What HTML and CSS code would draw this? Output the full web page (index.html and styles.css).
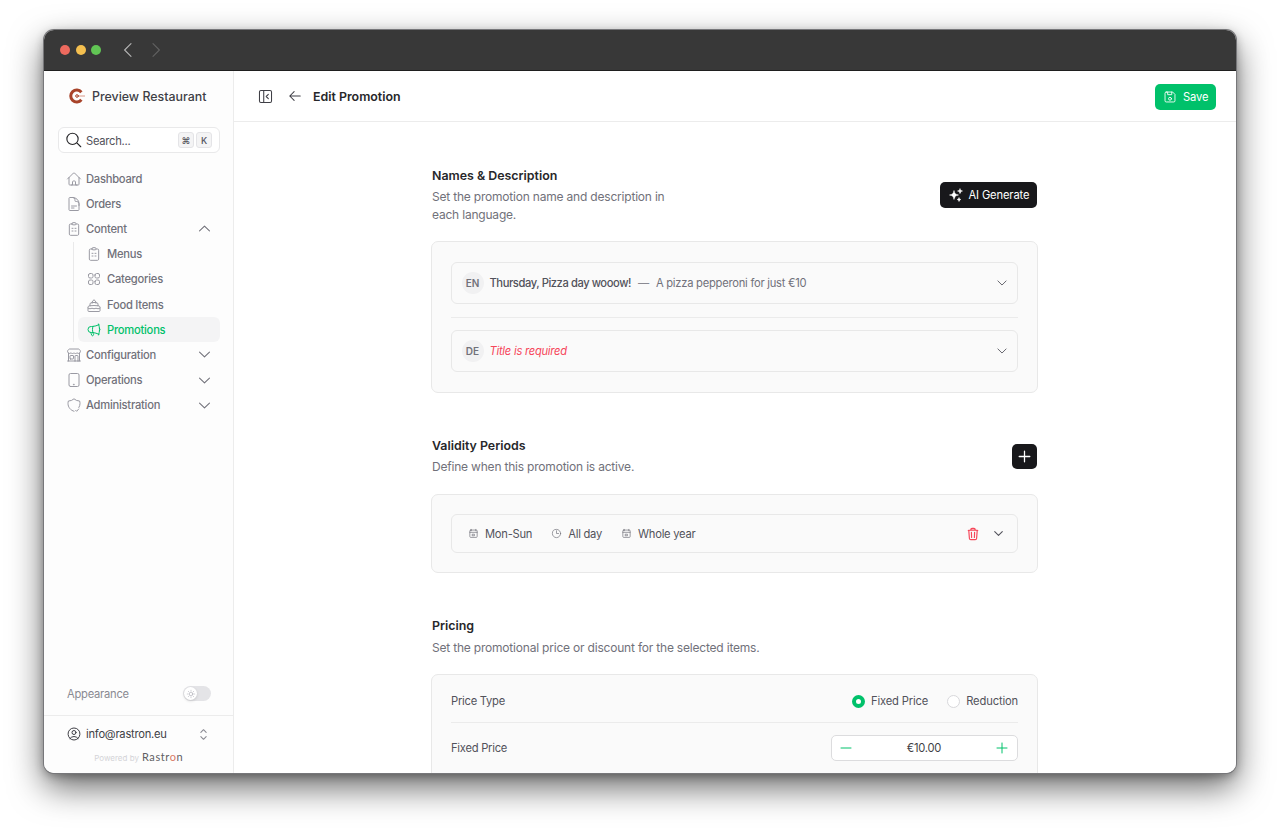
FILE: index.html
```html
<!DOCTYPE html>
<html lang="en">
<head>
    <meta charset="UTF-8">
    <title>Edit Promotion</title>
    <link rel="stylesheet" href="styles.css">
</head>
<body>
    <!-- icon sprite -->
    <svg class="sprite" xmlns="http://www.w3.org/2000/svg">
        <symbol id="i-home" viewBox="0 0 24 24"><path d="M2.25 12l8.954-8.955c.44-.439 1.152-.439 1.591 0L21.75 12M4.5 9.75v10.125c0 .621.504 1.125 1.125 1.125H9.75v-4.875c0-.621.504-1.125 1.125-1.125h2.25c.621 0 1.125.504 1.125 1.125V21h4.125c.621 0 1.125-.504 1.125-1.125V9.75M8.25 21h8.25"/></symbol>
        <symbol id="i-doc" viewBox="0 0 24 24"><path d="M19.5 14.25v-2.625a3.375 3.375 0 00-3.375-3.375h-1.5A1.125 1.125 0 0113.5 7.125v-1.5a3.375 3.375 0 00-3.375-3.375H8.25m0 12.75h7.5m-7.5 3H12M10.5 2.25H5.625c-.621 0-1.125.504-1.125 1.125v17.25c0 .621.504 1.125 1.125 1.125h12.75c.621 0 1.125-.504 1.125-1.125V11.25a9 9 0 00-9-9z"/></symbol>
        <symbol id="i-clip" viewBox="0 0 24 24"><path d="M9 4.5H6.75A1.75 1.75 0 005 6.25v13.5c0 .97.78 1.75 1.75 1.75h10.5c.97 0 1.75-.78 1.75-1.75V6.25a1.75 1.75 0 00-1.75-1.75H15M9 4.5V3.75c0-.7.55-1.25 1.25-1.25h3.5c.7 0 1.25.55 1.25 1.25v.75c0 .7-.55 1.25-1.25 1.25h-3.5C9.55 5.75 9 5.2 9 4.5zM9 11h1.5M13.5 11H15M9 15h1.5M13.5 15H15"/></symbol>
        <symbol id="i-grid" viewBox="0 0 24 24"><path d="M3.75 6A2.25 2.25 0 016 3.75h2.25A2.25 2.25 0 0110.5 6v2.25a2.25 2.25 0 01-2.25 2.25H6a2.25 2.25 0 01-2.25-2.25V6zM3.75 15.75A2.25 2.25 0 016 13.5h2.25a2.25 2.25 0 012.25 2.25V18a2.25 2.25 0 01-2.25 2.25H6A2.25 2.25 0 013.75 18v-2.25zM13.5 6a2.25 2.25 0 012.25-2.25H18A2.25 2.25 0 0120.25 6v2.25A2.25 2.25 0 0118 10.5h-2.25a2.25 2.25 0 01-2.25-2.25V6zM13.5 15.75a2.25 2.25 0 012.25-2.25H18a2.25 2.25 0 012.25 2.25V18A2.25 2.25 0 0118 20.25h-2.25A2.25 2.25 0 0113.5 18v-2.25z"/></symbol>
        <symbol id="i-cake" viewBox="0 0 24 24"><path d="M9 9.5V7.5l3-3.5 3 3.5v2M6 13.1v-2.5c0-1.1.85-2.1 1.98-2.2a48 48 0 018.04 0c1.13.1 1.98 1.1 1.98 2.2v2.5M21 16.5l-1.5.75a3.354 3.354 0 01-3 0 3.354 3.354 0 00-3 0 3.354 3.354 0 01-3 0 3.354 3.354 0 00-3 0 3.354 3.354 0 01-3 0L3 16.5m15-3.38a48.474 48.474 0 00-12 0m12 0c.39.049.777.102 1.163.16 1.07.16 1.837 1.094 1.837 2.175v5.17c0 .62-.504 1.124-1.125 1.124H4.125A1.125 1.125 0 013 20.625v-5.17c0-1.08.768-2.014 1.837-2.174A47.78 47.78 0 016 13.12"/></symbol>
        <symbol id="i-mega" viewBox="0 0 24 24"><path d="M10.34 15.84c-.688-.06-1.386-.09-2.09-.09H7.5a4.5 4.5 0 110-9h.75c.704 0 1.402-.03 2.09-.09m0 9.18c.253.962.584 1.892.985 2.783.247.55.06 1.21-.463 1.511l-.657.38c-.551.318-1.26.117-1.527-.461a20.845 20.845 0 01-1.44-4.282m3.102.069a18.03 18.03 0 01-.59-4.59c0-1.586.205-3.124.59-4.59m0 9.18a23.848 23.848 0 018.835 2.535M10.34 6.66a23.847 23.847 0 008.835-2.535m0 0A23.74 23.74 0 0018.795 3m.38 1.125a23.91 23.91 0 011.014 5.395m-1.014 8.855c-.118.38-.245.754-.38 1.125m.38-1.125a23.91 23.91 0 001.014-5.395m0-3.46c.495.413.811 1.035.811 1.73 0 .695-.316 1.317-.811 1.73m0-3.46a24.347 24.347 0 010 3.46"/></symbol>
        <symbol id="i-store" viewBox="0 0 24 24"><path d="M13.5 21v-7.5a.75.75 0 01.75-.75h3a.75.75 0 01.75.75V21m-4.5 0H2.36m11.14 0H18m0 0h3.64m-1.39 0V9.349m-16.5 11.65V9.35m0 0a3.001 3.001 0 003.75-.615A2.993 2.993 0 009.75 9.75c.896 0 1.7-.393 2.25-1.016a2.993 2.993 0 002.25 1.016c.896 0 1.7-.393 2.25-1.016a3.001 3.001 0 003.75.614m-16.5 0a3.004 3.004 0 01-.621-4.72L4.318 3.44A1.5 1.5 0 015.378 3h13.243a1.5 1.5 0 011.06.44l1.19 1.189a3 3 0 01-.621 4.72m-13.5 8.65h3.75a.75.75 0 00.75-.75V13.5a.75.75 0 00-.75-.75H6.75a.75.75 0 00-.75.75v3.75c0 .415.336.75.75.75z"/></symbol>
        <symbol id="i-tablet" viewBox="0 0 24 24"><path d="M6.75 21.75h10.5a2.25 2.25 0 002.25-2.25v-15a2.25 2.25 0 00-2.25-2.25H6.75A2.25 2.25 0 004.5 4.5v15a2.25 2.25 0 002.25 2.25zM11.6 18.4h.8v.8h-.8z"/></symbol>
        <symbol id="i-shield" viewBox="0 0 24 24"><path d="M12 21.4C6.8 20 3 15.3 3 9.75c0-1.3.2-2.6.6-3.75A12 12 0 0012 2.7 12 12 0 0020.4 6c.4 1.2.6 2.45.6 3.75 0 2.2-.6 4.2-1.7 6M14.5 20l1.5 1.5 3-3.5"/></symbol>
        <symbol id="i-user" viewBox="0 0 24 24"><path d="M17.982 18.725A7.488 7.488 0 0012 15.75a7.488 7.488 0 00-5.982 2.975m11.963 0a9 9 0 10-11.963 0m11.963 0A8.966 8.966 0 0112 21a8.966 8.966 0 01-5.982-2.275M15 9.75a3 3 0 11-6 0 3 3 0 016 0z"/></symbol>
        <symbol id="i-down" viewBox="0 0 24 24"><path d="M5 8.5l7 7 7-7"/></symbol>
        <symbol id="i-up" viewBox="0 0 24 24"><path d="M5 15.5l7-7 7 7"/></symbol>
        <symbol id="i-cal" viewBox="0 0 24 24"><path d="M7 3v3M17 3v3M4 9.5h16M6 4.5h12a2 2 0 012 2v12a2 2 0 01-2 2H6a2 2 0 01-2-2v-12a2 2 0 012-2zM10 13.5h4V17h-4z"/></symbol>
        <symbol id="i-clock" viewBox="0 0 24 24"><path d="M12 6v6h4.5m4.5 0a9 9 0 11-18 0 9 9 0 0118 0z"/></symbol>
        <symbol id="i-trash" viewBox="0 0 24 24"><path d="M14.74 9l-.346 9m-4.788 0L9.26 9m9.968-3.21c.342.052.682.107 1.022.166m-1.022-.165L18.16 19.673a2.25 2.25 0 01-2.244 2.077H8.084a2.25 2.25 0 01-2.244-2.077L4.772 5.79m14.456 0a48.108 48.108 0 00-3.478-.397m-12 .562c.34-.059.68-.114 1.022-.165m0 0a48.11 48.11 0 013.478-.397m7.5 0v-.916c0-1.18-.91-2.164-2.09-2.201a51.964 51.964 0 00-3.32 0c-1.18.037-2.09 1.022-2.09 2.201v.916m7.5 0a48.667 48.667 0 00-7.5 0"/></symbol>
    </svg>

    <div class="window">
        <div class="titlebar">
            <span class="dot dot_red"></span>
            <span class="dot dot_yellow"></span>
            <span class="dot dot_green"></span>
            <svg class="nav_arrow nav_back" viewBox="0 0 24 24"><path d="M16 3.5L7.5 12l8.500 8.500"/></svg>
            <svg class="nav_arrow nav_next" viewBox="0 0 24 24"><path d="M8 3.500l8.500 8.500L8 20.500"/></svg>
        </div>
        <div class="app">
            <!-- sidebar -->
            <aside class="sidebar">
                <div class="brand">
                    <svg class="brand_logo" viewBox="0 0 16 16">
                        <path class="brand_ring" d="M12.4 4.2A6 6 0 1 0 12.400 11.800" />
                        <path class="brand_hand" d="M7 8h9" />
                        <circle class="brand_pin" cx="8" cy="8" r="1.300" />
                    </svg>
                    <span>Preview Restaurant</span>
                </div>
                <div class="search">
                    <svg class="search_icon" viewBox="0 0 24 24"><path d="M21 21l-5.200-5.200M17.500 10.500a7.500 7.500 0 11-15 0 7.500 7.500 0 0115 0z"/></svg>
                    <span class="search_text">Search...</span>
                    <kbd class="key">⌘</kbd>
                    <kbd class="key">K</kbd>
                </div>
                <nav class="menu">
                    <a class="menu_item"><svg class="icon"><use href="#i-home"/></svg>Dashboard</a>
                    <a class="menu_item"><svg class="icon"><use href="#i-doc"/></svg>Orders</a>
                    <a class="menu_item"><svg class="icon"><use href="#i-clip"/></svg>Content<svg class="menu_chev"><use href="#i-up"/></svg></a>
                    <div class="submenu">
                        <a class="menu_item"><svg class="icon"><use href="#i-clip"/></svg>Menus</a>
                        <a class="menu_item"><svg class="icon"><use href="#i-grid"/></svg>Categories</a>
                        <a class="menu_item"><svg class="icon"><use href="#i-cake"/></svg>Food Items</a>
                        <a class="menu_item menu_active"><svg class="icon"><use href="#i-mega"/></svg>Promotions</a>
                    </div>
                    <a class="menu_item"><svg class="icon"><use href="#i-store"/></svg>Configuration<svg class="menu_chev"><use href="#i-down"/></svg></a>
                    <a class="menu_item"><svg class="icon"><use href="#i-tablet"/></svg>Operations<svg class="menu_chev"><use href="#i-down"/></svg></a>
                    <a class="menu_item"><svg class="icon"><use href="#i-shield"/></svg>Administration<svg class="menu_chev"><use href="#i-down"/></svg></a>
                </nav>
                <div class="appearance">
                    <span>Appearance</span>
                    <div class="toggle">
                        <span class="toggle_knob">
                            <svg viewBox="0 0 24 24"><path d="M12 3v2.500M12 18.500V21M3 12h2.500M18.500 12H21M5.600 5.600l1.800 1.800M16.600 16.600l1.800 1.800M5.600 18.400l1.800-1.800M16.600 7.400l1.800-1.800M16 12a4 4 0 11-8 0 4 4 0 018 0z"/></svg>
                        </span>
                    </div>
                </div>
                <div class="account">
                    <div class="account_row">
                        <svg class="icon"><use href="#i-user"/></svg>
                        <span class="account_mail">info@rastron.eu</span>
                        <svg class="account_sort" viewBox="0 0 24 24"><path d="M8.250 15L12 18.750 15.750 15m-7.500-6L12 5.250 15.750 9"/></svg>
                    </div>
                    <div class="powered">Powered by <span class="powered_logo">Rastr<b>o</b>n</span></div>
                </div>
            </aside>

            <!-- main area -->
            <main class="main">
                <header class="topbar">
                    <svg class="top_icon" viewBox="0 0 24 24"><path d="M5.500 3.500h13a2 2 0 012 2v13a2 2 0 01-2 2h-13a2 2 0 01-2-2v-13a2 2 0 012-2zM9.500 3.500v17M16 9l-3 3 3 3"/></svg>
                    <svg class="top_icon top_back" viewBox="0 0 24 24"><path d="M10.500 19.500L3 12l7.500-7.500M3 12h18"/></svg>
                    <h1 class="page_title">Edit Promotion</h1>
                    <button class="btn btn_save">
                        <svg viewBox="0 0 24 24"><path d="M5.500 3.500h11l4 4v11a2 2 0 01-2 2h-13a2 2 0 01-2-2v-13a2 2 0 012-2zM8 3.500V8h7V3.500M14.500 15a2.500 2.500 0 11-5 0 2.500 2.500 0 015 0z"/></svg>
                        Save
                    </button>
                </header>

                <div class="content">
                    <section class="section">
                        <div class="section_head">
                            <div>
                                <h2>Names &amp; Description</h2>
                                <p class="section_desc">Set the promotion name and description in<br>each language.</p>
                            </div>
                            <button class="btn btn_dark">
                                <svg viewBox="0 0 24 24"><path d="M9.813 15.904L9 18.750l-.813-2.846a4.500 4.500 0 00-3.090-3.090L2.250 12l2.846-.813a4.500 4.500 0 003.090-3.090L9 5.250l.813 2.846a4.500 4.500 0 003.090 3.090L15.750 12l-2.846.813a4.500 4.500 0 00-3.090 3.090zM18.259 8.715L18 9.750l-.259-1.035a3.375 3.375 0 00-2.455-2.456L14.250 6l1.036-.259a3.375 3.375 0 002.455-2.456L18 2.250l.259 1.035a3.375 3.375 0 002.456 2.456L21.750 6l-1.035.259a3.375 3.375 0 00-2.456 2.456zM16.894 20.567L16.500 21.750l-.394-1.183a2.250 2.250 0 00-1.423-1.423L13.500 18.750l1.183-.394a2.250 2.250 0 001.423-1.423l.394-1.183.394 1.183a2.250 2.250 0 001.423 1.423l1.183.394-1.183.394a2.250 2.250 0 00-1.423 1.423z"/></svg>
                                AI Generate
                            </button>
                        </div>
                        <div class="card">
                            <div class="row_box lang_row">
                                <span class="lang">EN</span>
                                <span class="lang_title">Thursday, Pizza day wooow!</span>
                                <span class="lang_sep">—</span>
                                <span class="lang_desc">A pizza pepperoni for just €10</span>
                                <svg class="row_chev"><use href="#i-down"/></svg>
                            </div>
                            <hr class="line">
                            <div class="row_box lang_row">
                                <span class="lang">DE</span>
                                <span class="lang_error">Title is required</span>
                                <svg class="row_chev"><use href="#i-down"/></svg>
                            </div>
                        </div>
                    </section>

                    <section class="section section_valid">
                        <div class="section_head section_head_add">
                            <div>
                                <h2>Validity Periods</h2>
                                <p class="section_desc">Define when this promotion is active.</p>
                            </div>
                            <button class="btn_add">
                                <svg viewBox="0 0 24 24"><path d="M12 4.500v15M4.500 12h15"/></svg>
                            </button>
                        </div>
                        <div class="card card_period">
                            <div class="row_box period_row">
                                <span class="period"><svg class="small_icon"><use href="#i-cal"/></svg>Mon-Sun</span>
                                <span class="period"><svg class="small_icon"><use href="#i-clock"/></svg>All day</span>
                                <span class="period"><svg class="small_icon"><use href="#i-cal"/></svg>Whole year</span>
                                <svg class="trash"><use href="#i-trash"/></svg>
                                <svg class="row_chev"><use href="#i-down"/></svg>
                            </div>
                        </div>
                    </section>

                    <section class="section section_price">
                        <div class="section_head section_head_price">
                            <div>
                                <h2>Pricing</h2>
                                <p class="section_desc">Set the promotional price or discount for the selected items.</p>
                            </div>
                        </div>
                        <div class="card card_price">
                            <div class="price_row price_row_type">
                                <span class="price_label">Price Type</span>
                                <span class="radio radio_on">Fixed Price</span>
                                <span class="radio">Reduction</span>
                            </div>
                            <hr class="line line_price">
                            <div class="price_row price_row_value">
                                <span class="price_label">Fixed Price</span>
                                <div class="stepper">
                                    <svg viewBox="0 0 24 24"><path d="M4.500 12h15"/></svg>
                                    <span>€10.00</span>
                                    <svg viewBox="0 0 24 24"><path d="M12 4.500v15M4.500 12h15"/></svg>
                                </div>
                            </div>
                        </div>
                    </section>
                </div>
            </main>
        </div>
    </div>
</body>
</html>
```

FILE: styles.css
```css
*{
    margin: 0;
    padding: 0;
    box-sizing: border-box;
}
html,body{
    height: 100%;
    overflow: hidden;
}
body{
    padding: 30px 44px 59px;
    background-color: #fff;
    font-family: "Inter", "Liberation Sans", sans-serif;
    font-size: 11.2px;
    letter-spacing: -0.25px;
    color: #71717a;
}
svg{
    fill: none;
    stroke: currentColor;
    stroke-width: 1.5;
    stroke-linecap: round;
    stroke-linejoin: round;
    flex-shrink: 0;
}
.sprite{
    display: none;
}

/* window */
.window{
    height: 743px;
    display: flex;
    flex-direction: column;
    border-radius: 10px;
    overflow: hidden;
    background-color: #fff;
    box-shadow: 0 0 0 1px #77777a, 0 3px 10px rgba(0,0,0,0.3), 0 14px 34px rgba(0,0,0,0.6);
}
.titlebar{
    height: 41px;
    flex-shrink: 0;
    display: flex;
    align-items: center;
    padding-left: 16px;
    background-color: #383838;
    border-bottom: 1px solid #1f1f1f;
}
.dot{
    width: 10px;
    height: 10px;
    margin-right: 5.5px;
    border-radius: 50%;
}
.dot_red{ background-color: #ed6a5e; }
.dot_yellow{ background-color: #f4bf4f; }
.dot_green{ background-color: #61c554; }
.nav_arrow{
    width: 18px;
    height: 18px;
}
.nav_back{
    margin-left: 12.5px;
    color: #b4b4b4;
}
.nav_next{
    margin-left: 10px;
    color: #616161;
}
.app{
    flex: 1;
    display: flex;
    min-height: 0;
}

/* sidebar */
.sidebar{
    width: 190px;
    flex-shrink: 0;
    display: flex;
    flex-direction: column;
    background-color: #fdfdfd;
    border-right: 1px solid #ececec;
}
.brand{
    height: 50px;
    display: flex;
    align-items: center;
    padding-left: 25px;
    font-size: 12.4px;
    font-weight: 500;
    letter-spacing: 0;
    color: #3f3f46;
}
.brand_logo{
    width: 16px;
    height: 16px;
    margin-right: 7px;
}
.brand_ring{
    stroke: #a8432a;
    stroke-width: 3;
    stroke-linecap: butt;
}
.brand_hand{
    stroke: #d99888;
    stroke-width: 1;
}
.brand_pin{
    fill: #fff;
    stroke: #a8432a;
    stroke-width: 1;
}
.search{
    height: 26px;
    margin: 6px 13px 0 14px;
    display: flex;
    align-items: center;
    gap: 2px;
    padding: 0 7px 0 6px;
    background-color: #fff;
    border: 1px solid #e9e9ea;
    border-radius: 6px;
    color: #52525b;
}
.search_icon{
    width: 18px;
    height: 18px;
    margin-right: 1px;
    color: #27272a;
}
.search_text{
    flex: 1;
    padding-top: 1px;
}
.key{
    width: 16px;
    height: 16px;
    display: flex;
    align-items: center;
    justify-content: center;
    font-family: "Inter", "DejaVu Sans", sans-serif;
    font-size: 9px;
    font-weight: 500;
    letter-spacing: 0;
    background-color: #f4f4f5;
    border: 1px solid #e4e4e7;
    border-radius: 3px;
}
.menu{
    margin-top: 13px;
    padding: 0 13px 0 14px;
    font-weight: 500;
}
.menu_item{
    height: 25.2px;
    display: flex;
    align-items: center;
    padding-left: 7.5px;
    border-radius: 6px;
}
.icon{
    width: 16px;
    height: 16px;
    margin-right: 4.5px;
    color: #9a9aa3;
}
.menu_chev{
    width: 17px;
    height: 17px;
    margin-left: auto;
    margin-right: 7px;
    color: #71717a;
}
.submenu{
    margin-left: 15px;
    padding-left: 4px;
    border-left: 1px solid #e9e9ea;
}
.submenu .icon{
    margin-right: 5.5px;
}
.menu_active{
    background-color: #f4f4f5;
    color: #00c16a;
}
.menu_active .icon{
    color: #00c16a;
}
.appearance{
    margin-top: auto;
    height: 44px;
    padding: 1px 22px 0 23px;
    display: flex;
    align-items: center;
    justify-content: space-between;
    color: #8a8a92;
}
.toggle{
    width: 28px;
    height: 15px;
    padding: 1px;
    border-radius: 8px;
    background-color: #e4e4e7;
}
.toggle_knob{
    width: 13px;
    height: 13px;
    display: flex;
    align-items: center;
    justify-content: center;
    border-radius: 50%;
    background-color: #fff;
    box-shadow: 0 1px 3px rgba(0,0,0,0.15);
    color: #a1a1aa;
}
.toggle_knob svg{
    width: 10px;
    height: 10px;
    stroke-width: 1.2;
}
.account{
    height: 58px;
    border-top: 1px solid #ececec;
    padding: 9px 21px 0 21.5px;
}
.account_row{
    height: 18px;
    display: flex;
    align-items: center;
    color: #3f3f46;
}
.account_row .icon{
    color: #3f3f46;
}
.account_mail{
    flex: 1;
}
.account_sort{
    width: 17px;
    height: 17px;
    color: #8a8a92;
}
.powered{
    margin-top: 7px;
    display: flex;
    align-items: baseline;
    justify-content: center;
    gap: 3px;
    font-size: 8px;
    letter-spacing: 0;
    color: #d4d4d8;
}
.powered_logo{
    font-family: "Lato", sans-serif;
    font-size: 11px;
    font-weight: 400;
    letter-spacing: 0.6px;
    color: #5f5f64;
}
.powered_logo b{
    font-weight: 400;
    color: #d97a66;
}

/* main */
.main{
    flex: 1;
    min-width: 0;
    display: flex;
    flex-direction: column;
    background-color: #fff;
}
.topbar{
    height: 51px;
    flex-shrink: 0;
    display: flex;
    align-items: center;
    padding: 0 20px 0 23px;
    border-bottom: 1px solid #ececec;
}
.top_icon{
    width: 17px;
    height: 17px;
    color: #3f3f46;
}
.top_back{
    margin-left: 14px;
    width: 14px;
    height: 14px;
    stroke-width: 1.8;
}
.page_title{
    margin-left: 11px;
    font-size: 12.4px;
    font-weight: 600;
    letter-spacing: 0;
    color: #27272a;
}
.btn{
    display: flex;
    align-items: center;
    border: none;
    border-radius: 5px;
    font-family: inherit;
    font-size: 11.2px;
    font-weight: 400;
    letter-spacing: -0.15px;
    color: #fff;
}
.btn_save{
    margin-left: auto;
    margin-top: 1px;
    width: 61px;
    height: 26px;
    gap: 6px;
    padding-left: 8px;
    background-color: #00c16a;
}
.btn_save svg{
    width: 14px;
    height: 14px;
}
.btn_dark{
    width: 97.5px;
    height: 26px;
    margin-right: 1px;
    margin-bottom: 2px;
    gap: 5px;
    padding-left: 8px;
    background-color: #18181b;
}
.btn_dark svg{
    width: 16px;
    height: 16px;
    fill: currentColor;
    stroke-width: 0.8;
}
.content{
    flex: 1;
    min-height: 0;
    width: 606px;
    margin: 0 auto;
    padding-top: 46px;
}
.section_head{
    display: flex;
    justify-content: space-between;
    align-items: center;
    margin-bottom: 17px;
}
.section_head h2{
    font-size: 12.4px;
    font-weight: 600;
    letter-spacing: 0;
    color: #27272a;
    line-height: 15px;
}
.section_desc{
    margin-top: 5px;
    font-size: 12px;
    letter-spacing: -0.2px;
    line-height: 18px;
    width: 250px;
}
.section_head_add .section_desc,
.section_head_price .section_desc{
    width: auto;
}
.section_valid{
    margin-top: 44.5px;
}
.section_price{
    margin-top: 45px;
}
.section_head_add{
    margin-bottom: 18.5px;
}
.section_head_price{
    margin-bottom: 17px;
}
.section_head_price .section_desc{
    margin-top: 6px;
}
.btn_add{
    width: 25px;
    height: 25px;
    margin-right: 1px;
    display: flex;
    align-items: center;
    justify-content: center;
    border: none;
    border-radius: 5px;
    background-color: #18181b;
    color: #fff;
}
.btn_add svg{
    width: 17px;
    height: 17px;
    stroke-width: 1.8;
}
.card{
    margin-left: -1px;
    padding: 20px 19px;
    background-color: #fafafa;
    border: 1px solid #e8e8e8;
    border-radius: 7px;
}
.card_period{
    padding-top: 19px;
    padding-bottom: 19px;
}
.row_box{
    display: flex;
    align-items: center;
    border: 1px solid #e8e8e8;
    border-radius: 6px;
}
.lang_row{
    height: 42px;
    padding: 0 8.5px 0 9.5px;
}
.lang{
    width: 22px;
    height: 22px;
    display: flex;
    align-items: center;
    justify-content: center;
    margin-right: 6px;
    border-radius: 50%;
    background-color: #f1f1f2;
    font-size: 10px;
    font-weight: 600;
    letter-spacing: 0;
}
.lang_title{
    font-weight: 500;
    letter-spacing: -0.43px;
    color: #52525b;
}
.lang_sep{
    margin: 0 7px;
    color: #8a8a92;
}
.lang_error{
    font-style: italic;
    color: #f6475a;
}
.row_chev{
    width: 14px;
    height: 14px;
    margin-left: auto;
    color: #52525b;
}
.line{
    height: 1px;
    margin: 13px 0 12px;
    border: none;
    background-color: #ebebeb;
}
.period_row{
    height: 39px;
    padding: 0 12px 0 16px;
    gap: 19px;
    color: #52525b;
}
.period{
    display: flex;
    align-items: center;
    gap: 6px;
}
.small_icon{
    width: 11px;
    height: 11px;
    color: #71717a;
}
.trash{
    width: 14px;
    height: 14px;
    margin-left: auto;
    margin-right: -7px;
    stroke-width: 2;
    color: #f6475a;
}
.period_row .row_chev{
    width: 13px;
    height: 13px;
    margin-left: 0;
    stroke-width: 2;
}
.card_price{
    height: 130px;
    padding-top: 3px;
    padding-bottom: 0;
}
.price_row{
    display: flex;
    align-items: center;
    gap: 19px;
    color: #52525b;
}
.price_row_type{
    height: 44px;
    padding-top: 2px;
}
.price_row_value{
    height: 49px;
    padding-top: 1px;
}
.line_price{
    margin: 0;
}
.price_label{
    margin-right: auto;
}
.radio{
    display: flex;
    align-items: center;
    gap: 6px;
    letter-spacing: -0.15px;
}
.radio::before{
    content: "";
    box-sizing: border-box;
    width: 13px;
    height: 13px;
    border-radius: 50%;
    background-color: #fff;
    border: 1px solid #d8d8db;
}
.radio_on::before{
    border: 4px solid #00c16a;
}
.stepper{
    width: 187px;
    height: 26px;
    display: flex;
    align-items: center;
    justify-content: space-between;
    padding: 0 7px 0 6px;
    background-color: #fff;
    border: 1px solid #dcdcde;
    border-radius: 5px;
    color: #3f3f46;
}
.stepper svg{
    width: 16px;
    height: 16px;
    color: #00c16a;
}
```
